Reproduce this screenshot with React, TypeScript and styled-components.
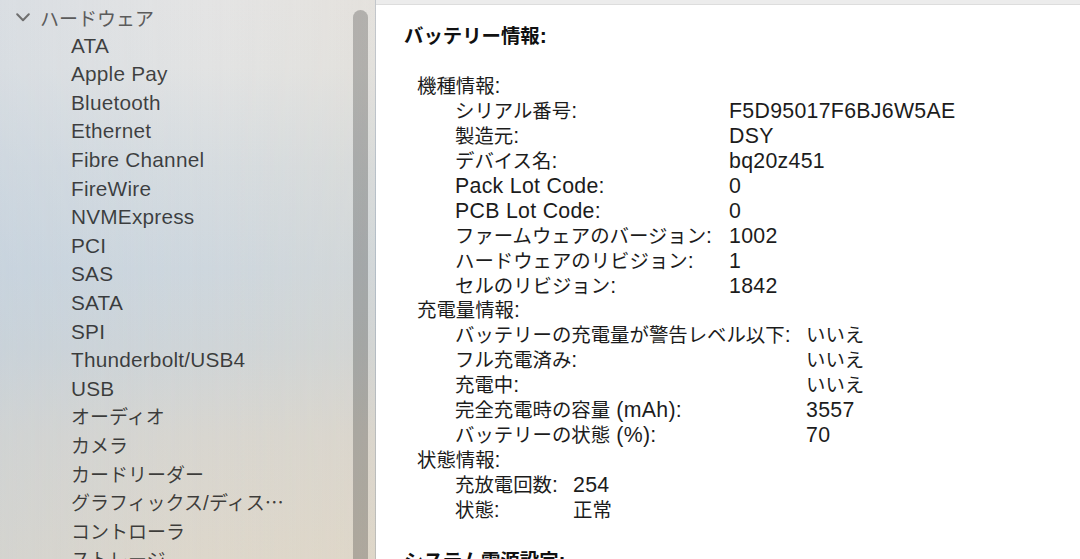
import React from "react";
import styled, { createGlobalStyle } from "styled-components";

const GlobalStyle = createGlobalStyle`
  html, body {
    margin: 0;
    padding: 0;
    width: 1080px;
    height: 559px;
    overflow: hidden;
    background: #ffffff;
  }
  #root { height: 559px; }
  * { box-sizing: border-box; }
`;

const Window = styled.div`
  display: flex;
  width: 1080px;
  height: 559px;
  overflow: hidden;
  font-family: "Liberation Sans", "Noto Sans CJK JP", sans-serif;
`;

/* A run of text in one script: Latin and Japanese are sized separately
   so both read at the same visual weight. */
const Run = styled.span<{ $latin: boolean }>`
  font-family: ${(p) =>
    p.$latin
      ? `"Liberation Sans", "Noto Sans CJK JP", sans-serif`
      : `"Noto Sans CJK JP", sans-serif`};
  font-size: ${(p) => (p.$latin ? "var(--latin-size)" : "var(--cjk-size)")};
  letter-spacing: ${(p) => (p.$latin ? "var(--latin-track)" : "0")};
  line-height: 1;
`;

const splitRuns = (text: string) =>
  (text.match(/[\x00-\x7F]+|[^\x00-\x7F]+/g) ?? []).map((chunk) => ({
    chunk,
    latin: /^[\x00-\x7F]+$/.test(chunk),
  }));

function Mixed({ text }: { text: string }) {
  return (
    <>
      {splitRuns(text).map((r, i) => (
        <Run key={i} $latin={r.latin}>
          {r.chunk}
        </Run>
      ))}
    </>
  );
}

/* ---------- sidebar ---------- */

const Sidebar = styled.aside`
  --latin-size: 20.8px;
  --cjk-size: 19px;
  --latin-track: 0.2px;
  flex: none;
  width: 376px;
  height: 100%;
  display: flex;
  font-size: 19px;
  border-right: 1px solid rgba(0, 0, 0, 0.1);
  background:
    linear-gradient(90deg, rgba(180, 200, 222, 0.22) 0%, rgba(180, 200, 222, 0) 55%, rgba(230, 215, 190, 0.18) 100%),
    linear-gradient(180deg, #e4e4e4 0%, #e2e3e3 12%, #d6dce0 30%, #ced7de 48%, #cfd5d8 62%, #d8d6d0 78%, #ddd7cb 100%);
`;

const SidebarList = styled.ul`
  flex: 1;
  margin: 0;
  padding: 3px 0 0 0;
  list-style: none;
  overflow: hidden;
`;

const GroupHeader = styled.li`
  height: 28.6px;
  display: flex;
  align-items: center;
  gap: 10px;
  padding-left: 16px;
  color: #5b5b5b;
`;

const Chevron = styled.svg`
  flex: none;
  width: 14px;
  height: 9px;
  margin-top: 1px;
`;

const SidebarItem = styled.li`
  height: 28.6px;
  line-height: 28.6px;
  padding: 1px 0 0 71px;
  white-space: nowrap;
  color: rgba(0, 0, 0, 0.72);
`;

const ScrollTrack = styled.div`
  flex: none;
  width: 22px;
  padding: 10px 7px 0 0;
  display: flex;
`;

const ScrollThumb = styled.div`
  flex: 1;
  height: 620px;
  border-radius: 8px;
  background: rgba(0, 0, 0, 0.22);
`;

/* ---------- detail panel ---------- */

const Panel = styled.main`
  flex: 1;
  height: 100%;
  display: flex;
  flex-direction: column;
  background: #ffffff;
  overflow: hidden;
`;

const HeaderEdge = styled.div`
  flex: none;
  height: 5px;
  background: #ececec;
  border-bottom: 1px solid #dddddd;
`;

const Report = styled.div`
  --latin-size: 21.3px;
  --cjk-size: 19.4px;
  --latin-track: 0.3px;
  padding: 18.5px 0 0 28px;
  color: #1c1c1c;
  font-size: 19.4px;
  line-height: 24.9px;
`;

const Line = styled.div`
  height: 24.9px;
  white-space: nowrap;
`;

const SectionTitle = styled(Line)<{ $gap?: number }>`
  font-weight: 700;
  color: #111111;
  margin-bottom: ${(p) => p.$gap ?? 26}px;
`;

const GroupLabel = styled(Line)`
  padding-left: 13px;
`;

const Rows = styled.div<{ $labelWidth: number }>`
  display: grid;
  grid-template-columns: ${(p) => p.$labelWidth}px auto;
  grid-auto-rows: 24.9px;
  padding-left: 51px;
`;

const Label = styled(Line)``;

const Value = styled(Line)``;

const Spacer = styled.div`
  height: 27px;
`;

const sidebarItems = [
  "ATA",
  "Apple Pay",
  "Bluetooth",
  "Ethernet",
  "Fibre Channel",
  "FireWire",
  "NVMExpress",
  "PCI",
  "SAS",
  "SATA",
  "SPI",
  "Thunderbolt/USB4",
  "USB",
  "オーディオ",
  "カメラ",
  "カードリーダー",
  "グラフィックス/ディス…",
  "コントローラ",
  "ストレージ",
];

type Group = {
  title: string;
  labelWidth: number;
  rows: [string, string][];
};

const groups: Group[] = [
  {
    title: "機種情報:",
    labelWidth: 274,
    rows: [
      ["シリアル番号:", "F5D95017F6BJ6W5AE"],
      ["製造元:", "DSY"],
      ["デバイス名:", "bq20z451"],
      ["Pack Lot Code:", "0"],
      ["PCB Lot Code:", "0"],
      ["ファームウェアのバージョン:", "1002"],
      ["ハードウェアのリビジョン:", "1"],
      ["セルのリビジョン:", "1842"],
    ],
  },
  {
    title: "充電量情報:",
    labelWidth: 351,
    rows: [
      ["バッテリーの充電量が警告レベル以下:", "いいえ"],
      ["フル充電済み:", "いいえ"],
      ["充電中:", "いいえ"],
      ["完全充電時の容量 (mAh):", "3557"],
      ["バッテリーの状態 (%):", "70"],
    ],
  },
  {
    title: "状態情報:",
    labelWidth: 118,
    rows: [
      ["充放電回数:", "254"],
      ["状態:", "正常"],
    ],
  },
];

export default function App() {
  return (
    <>
      <GlobalStyle />
      <Window>
        <Sidebar>
          <SidebarList>
            <GroupHeader>
              <Chevron viewBox="0 0 14 9">
                <polyline
                  points="1.2,1.2 7,7.2 12.8,1.2"
                  fill="none"
                  stroke="#6f6f6f"
                  strokeWidth="2"
                  strokeLinecap="round"
                  strokeLinejoin="round"
                />
              </Chevron>
              <Mixed text="ハードウェア" />
            </GroupHeader>
            {sidebarItems.map((name) => (
              <SidebarItem key={name}>
                <Mixed text={name} />
              </SidebarItem>
            ))}
          </SidebarList>
          <ScrollTrack>
            <ScrollThumb />
          </ScrollTrack>
        </Sidebar>

        <Panel>
          <HeaderEdge />
          <Report>
            <SectionTitle>
              <Mixed text="バッテリー情報:" />
            </SectionTitle>
            {groups.map((g) => (
              <React.Fragment key={g.title}>
                <GroupLabel>
                  <Mixed text={g.title} />
                </GroupLabel>
                <Rows $labelWidth={g.labelWidth}>
                  {g.rows.map(([label, value]) => (
                    <React.Fragment key={label}>
                      <Label>
                        <Mixed text={label} />
                      </Label>
                      <Value>
                        <Mixed text={value} />
                      </Value>
                    </React.Fragment>
                  ))}
                </Rows>
              </React.Fragment>
            ))}
            <Spacer />
            <SectionTitle>
              <Mixed text="システム電源設定:" />
            </SectionTitle>
          </Report>
        </Panel>
      </Window>
    </>
  );
}
